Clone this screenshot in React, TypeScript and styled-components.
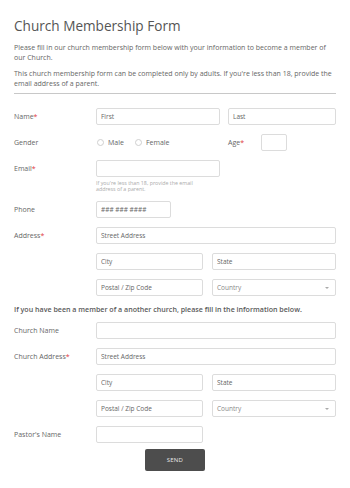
import * as React from "react";
import styled, { createGlobalStyle } from "styled-components";

const GlobalStyle = createGlobalStyle`
  html, body {
    margin: 0;
    padding: 0;
    background: #fff;
  }
  body {
    font-family: "Open Sans", "Liberation Sans", Arial, sans-serif;
    color: #666;
  }
  * { box-sizing: border-box; }
`;

const FormWrap = styled.form`
  width: 350px;
  padding: 16px 14px 20px;
`;

const Title = styled.h1`
  margin: 0;
  font-size: 13.6px;
  line-height: 20px;
  font-weight: 400;
  color: #555;
`;

const Intro = styled.p`
  margin: 7px 0 0;
  font-size: 7px;
  line-height: 10px;
  color: #666;
  & + & { margin-top: 6px; }
`;

const Divider = styled.hr`
  border: 0;
  border-top: 1px solid #c8c8c8;
  margin: 4px 0 14px;
`;

const Fields = styled.div`
  display: grid;
  grid-template-columns: 82px 240px;
  row-gap: 9px;
  align-items: start;
`;

const Label = styled.label`
  font-size: 7px;
  line-height: 17px;
  color: #666;
`;

const Req = styled.span`
  color: #e0393e;
`;

const Cell = styled.div`
  display: flex;
  flex-direction: column;
`;

const Pair = styled.div<{ $cols: string; $gap: number }>`
  display: grid;
  grid-template-columns: ${(p) => p.$cols};
  column-gap: ${(p) => p.$gap}px;
  align-items: center;
`;

const Stack = styled.div`
  display: grid;
  row-gap: 9px;
`;

const Input = styled.input<{ $w?: number }>`
  width: ${(p) => (p.$w ? `${p.$w}px` : "100%")};
  height: 17px;
  border: 1px solid #dcdcdc;
  border-radius: 2px;
  padding: 0 4px;
  font-family: inherit;
  font-size: 6.5px;
  color: #555;
  background: #fff;
  outline: none;
  &::placeholder { color: #666; }
`;

const SelectBox = styled.div`
  height: 17px;
  border: 1px solid #dcdcdc;
  border-radius: 2px;
  padding: 0 6px 0 4px;
  display: flex;
  align-items: center;
  justify-content: space-between;
  font-size: 6.5px;
  color: #888;
`;

const Caret = styled.span`
  width: 0;
  height: 0;
  border-left: 2.5px solid transparent;
  border-right: 2.5px solid transparent;
  border-top: 2.5px solid #aaa;
`;

const Hint = styled.div`
  margin-top: 3px;
  font-size: 5.3px;
  line-height: 6px;
  color: #aaa;
  width: 112px;
`;

const Radios = styled.div`
  display: flex;
  align-items: center;
  height: 17px;
  font-size: 7px;
  color: #666;
`;

const RadioOpt = styled.span`
  display: flex;
  align-items: center;
  gap: 4px;
  margin-left: 1px;
  margin-right: 10px;
`;

const Circle = styled.span`
  width: 7px;
  height: 7px;
  border: 1px solid #cfcfcf;
  border-radius: 50%;
`;

const AgeWrap = styled.div`
  display: flex;
  align-items: center;
`;

const AgeLabel = styled(Label)`
  width: 33px;
`;

const Note = styled.div`
  grid-column: 1 / -1;
  font-size: 7.1px;
  line-height: 8px;
  font-weight: 600;
  color: #5a5a5a;
`;

const Actions = styled.div`
  grid-column: 1 / -1;
  display: flex;
  justify-content: center;
  margin-top: -3px;
`;

const SendButton = styled.button`
  width: 60px;
  height: 22px;
  border: 0;
  border-radius: 2px;
  background: #4d4d4d;
  color: #e8e8e8;
  font-family: inherit;
  font-size: 6px;
  letter-spacing: 0.2px;
`;

const AddressBlock: React.FC = () => (
  <Stack>
    <Input placeholder="Street Address" />
    <Pair $cols="107px 124px" $gap={9}>
      <Input placeholder="City" />
      <Input placeholder="State" />
    </Pair>
    <Pair $cols="107px 124px" $gap={9}>
      <Input placeholder="Postal / Zip Code" />
      <SelectBox>
        Country
        <Caret />
      </SelectBox>
    </Pair>
  </Stack>
);

export default function App() {
  return (
    <>
      <GlobalStyle />
      <FormWrap onSubmit={(e) => e.preventDefault()}>
        <Title>Church Membership Form</Title>
        <Intro>
          Please fill in our church membership form below with your information to become a member of our Church.
        </Intro>
        <Intro>
          This church membership form can be completed only by adults. If you're less than 18, provide the email address of a parent.
        </Intro>
        <Divider />

        <Fields>
          <Label>
            Name<Req>*</Req>
          </Label>
          <Pair $cols="124px 108px" $gap={8}>
            <Input placeholder="First" />
            <Input placeholder="Last" />
          </Pair>

          <Label>Gender</Label>
          <Pair $cols="124px 108px" $gap={8}>
            <Radios>
              <RadioOpt>
                <Circle />
                Male
              </RadioOpt>
              <RadioOpt>
                <Circle />
                Female
              </RadioOpt>
            </Radios>
            <AgeWrap>
              <AgeLabel>
                Age<Req>*</Req>
              </AgeLabel>
              <Input $w={26} />
            </AgeWrap>
          </Pair>

          <Label>
            Email<Req>*</Req>
          </Label>
          <Cell>
            <Input $w={124} />
            <Hint>If you're less than 18, provide the email address of a parent.</Hint>
          </Cell>

          <Label>Phone</Label>
          <Cell>
            <Input $w={75} placeholder="### ### ####" />
          </Cell>

          <Label>
            Address<Req>*</Req>
          </Label>
          <AddressBlock />

          <Note>If you have been a member of a another church, please fill in the information below.</Note>

          <Label>Church Name</Label>
          <Input />

          <Label>
            Church Address<Req>*</Req>
          </Label>
          <AddressBlock />

          <Label>Pastor's Name</Label>
          <Cell>
            <Input $w={107} />
          </Cell>

          <Actions>
            <SendButton type="submit">SEND</SendButton>
          </Actions>
        </Fields>
      </FormWrap>
    </>
  );
}
